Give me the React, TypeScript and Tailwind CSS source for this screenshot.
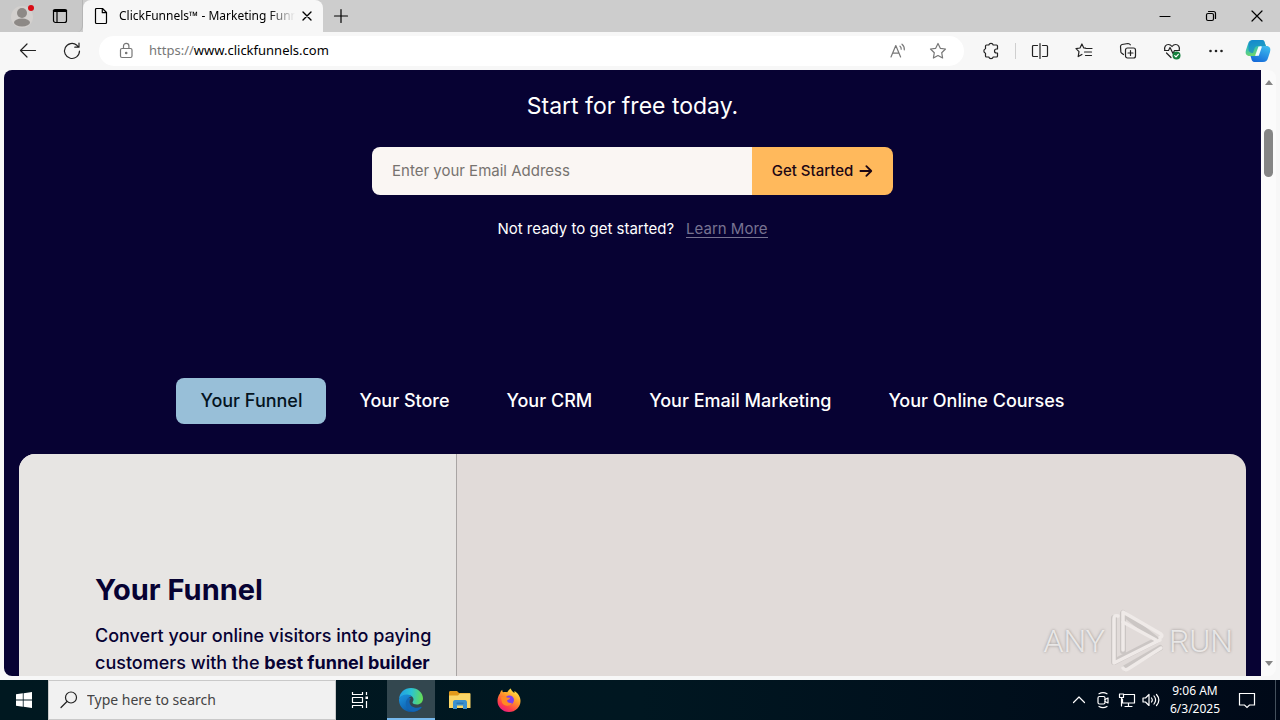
import type { ReactNode } from "react";

type IconProps = { children: ReactNode; className?: string };

function Icon({ children, className = "size-5" }: IconProps) {
  return (
    <svg
      viewBox="0 0 20 20"
      className={className}
      fill="none"
      stroke="currentColor"
      strokeWidth="1.2"
      strokeLinecap="round"
      strokeLinejoin="round"
      aria-hidden="true"
    >
      {children}
    </svg>
  );
}

type BarButtonProps = { label: string; className: string; children: ReactNode };

function BarButton({ label, className, children }: BarButtonProps) {
  return (
    <button
      type="button"
      aria-label={label}
      className={`flex shrink-0 items-center justify-center ${className}`}
    >
      {children}
    </button>
  );
}

function TabStrip() {
  return (
    <header className="flex h-8 shrink-0 bg-[#cdcdcd] text-black">
      <div className="flex w-[83px] shrink-0 items-center rounded-br-md border-r border-[#b5b5b5] bg-[#c8c8c8] pl-1">
        <BarButton label="Profile" className="w-9">
          <svg viewBox="0 0 26 26" className="size-[26px]" aria-hidden="true">
            <circle cx="13" cy="14" r="11" fill="#d3d0ce" />
            <circle cx="13" cy="10" r="5" fill="#8d8986" />
            <ellipse cx="13" cy="19.500" rx="8" ry="4" fill="#8d8986" />
            <circle cx="22" cy="5" r="3" fill="#d90b15" />
          </svg>
        </BarButton>
        <BarButton label="Workspaces" className="w-10">
          <Icon>
            <rect x="3.500" y="3.500" width="13" height="13" rx="2" />
            <path d="M4 4.800h12" strokeWidth="2.400" />
            <path d="M7 6v10.500" />
          </Icon>
        </BarButton>
      </div>
      <div className="flex w-60 shrink-0 items-center rounded-t-lg bg-[#f7f7f7] pl-2">
        <Icon className="size-5 shrink-0">
          <path d="M5.500 2.500h6l4 4v10a1 1 0 0 1-1 1h-9a1 1 0 0 1-1-1v-13a1 1 0 0 1 1-1z" />
          <path d="M11.300 2.700v4h4" />
        </Icon>
        <span className="ml-2 w-[176px] overflow-hidden bg-linear-to-r from-black from-85% to-transparent bg-clip-text text-xs whitespace-nowrap text-transparent">
          ClickFunnels™ - Marketing Funnels
        </span>
        <BarButton label="Close tab" className="w-6">
          <Icon className="size-4">
            <path d="M5 5l10 10M15 5L5 15" strokeWidth="1.700" />
          </Icon>
        </BarButton>
      </div>
      <BarButton label="New tab" className="w-9">
        <Icon>
          <path d="M10 3.500v13M3.500 10h13" />
        </Icon>
      </BarButton>
      <div className="ml-auto flex">
        <BarButton label="Minimize" className="w-[46px]">
          <Icon>
            <path d="M5 10.500h10" />
          </Icon>
        </BarButton>
        <BarButton label="Restore" className="w-[46px]">
          <Icon>
            <rect x="5.500" y="7.500" width="7" height="7" rx="1.500" />
            <path d="M7.500 5.500h5a2 2 0 0 1 2 2v5" />
          </Icon>
        </BarButton>
        <BarButton label="Close" className="w-[46px]">
          <Icon>
            <path d="M5 5l10 10M15 5L5 15" />
          </Icon>
        </BarButton>
      </div>
    </header>
  );
}

function CopilotLogo() {
  return (
    <svg viewBox="0 0 26 26" className="size-[26px]" aria-hidden="true">
      <defs>
        <linearGradient id="copilot-a" x1="0" y1="0" x2="0.3" y2="1">
          <stop offset="0" stopColor="#1489cf" />
          <stop offset="0.5" stopColor="#35c0b4" />
          <stop offset="1" stopColor="#6fd66c" />
        </linearGradient>
        <linearGradient id="copilot-b" x1="0.7" y1="0" x2="0.2" y2="1">
          <stop offset="0" stopColor="#3bb9ee" />
          <stop offset="1" stopColor="#1367d8" />
        </linearGradient>
      </defs>
      <path d="M8 2h9c2 0 2.500 1.500 3 3.500L21 8h-4c-2 0-3 1-3.500 2.500L11 18H5c-4 0-5-2.500-4-6l2-6c.8-2.500 2-4 5-4z" fill="url(#copilot-a)" />
      <path d="M8 2h9c2 0 2.500 1.500 3 3.500L21 8h-8c-2 0-3 1-3.500 2.500L8 15C5 15 3 13 3.500 10c.5-4 1.500-8 4.500-8z" fill="#0f83cf" opacity=".65" />
      <path d="M18 24H9.500c-2 0-2.700-1.500-3.200-3.500L5.500 18H10c2 0 3-1 3.500-2.500L16 8h5c4 0 5 2.500 4 6l-2 6c-.8 2.500-2 4-5 4z" fill="url(#copilot-b)" />
      <path d="M13.500 8.500H17l-3.200 9.200H10z" fill="#f4fbff" />
    </svg>
  );
}

const STAR = "M10 2.500l2.300 4.800 5.200.7-3.800 3.700.9 5.300-4.600-2.500L5.400 17l.9-5.300L2.500 8l5.200-.7z";

function Toolbar() {
  return (
    <nav className="flex h-[38px] shrink-0 items-center bg-[#f7f7f7] pr-0.5 pl-1.5 text-[#222]">
      <BarButton label="Back" className="w-11">
        <Icon>
          <path d="M17.500 9.500h-15M9 3L2.500 9.500 9 16" />
        </Icon>
      </BarButton>
      <BarButton label="Refresh" className="w-11">
        <Icon>
          <path d="M17.500 10a7.500 7.500 0 1 1-2.600-5.700l1.600 1.600M17 2v4.200h-4.200" />
        </Icon>
      </BarButton>
      <div className="mx-[5px] flex h-[30px] min-w-0 flex-1 items-center rounded-full bg-white pl-4">
        <BarButton label="Site information" className="w-[22px] text-[#777]">
          <Icon>
            <rect x="4.500" y="7.500" width="11.500" height="9" rx="1.500" />
            <path d="M7.500 7.300V5a2.700 2.700 0 0 1 5.400 0v2.300" />
            <circle cx="10.200" cy="12" r="0.700" fill="currentColor" />
          </Icon>
        </BarButton>
        <div className="ml-3 flex-1 text-[13px] whitespace-nowrap text-black">
          <span className="text-[#777]">https://</span>www.clickfunnels.com
        </div>
        <BarButton label="Read aloud" className="w-10 text-[#777]">
          <Icon>
            <path d="M3 16L7.800 4.500 12.600 16M4.600 12.200h6.400" />
            <path d="M12 5.200c1 .8 1.300 1.900 1.200 3M14 3.200c1.900 1.500 2.500 3.400 2.300 5.600" />
          </Icon>
        </BarButton>
        <BarButton label="Add to favorites" className="mr-1.5 w-10 text-[#777]">
          <Icon>
            <path d={STAR} />
          </Icon>
        </BarButton>
      </div>
      <BarButton label="Extensions" className="w-11">
        <Icon>
          <path d="M5.500 4h2.300a2.300 2.300 0 0 1 4.400 0h3.300a1 1 0 0 1 1 1v3h-1a2 2 0 0 0 0 4h1v3a1 1 0 0 1-1 1h-3.300a2.300 2.300 0 0 1-4.400 0H5.500a1 1 0 0 1-1-1v-2.800a2.300 2.300 0 0 1 0-4.400V5a1 1 0 0 1 1-1z" />
        </Icon>
      </BarButton>
      <div className="mx-0.5 h-4 w-px bg-[#cfcfcf]" />
      <BarButton label="Split screen" className="w-11">
        <Icon>
          <path d="M7.500 4.500h-4a1 1 0 0 0-1 1v9a1 1 0 0 0 1 1h4M12.500 4.500h4a1 1 0 0 1 1 1v9a1 1 0 0 1-1 1h-4M10 2.500v15" />
        </Icon>
      </BarButton>
      <BarButton label="Favorites" className="w-11">
        <Icon>
          <path d="M11.600 7.200l-1.800-.3L7.900 3 6 7l-4 .6 3 3-.8 5 3.700-2.200M12 7.500h6M10.500 11h7M11.500 14.500h6" />
        </Icon>
      </BarButton>
      <BarButton label="Collections" className="w-11">
        <Icon>
          <rect x="7.500" y="7" width="10" height="10" rx="2" />
          <path d="M12.500 9.500v5M10 12h5M5.500 13.500l-2-1.500a2 2 0 0 1-.7-2L2.500 5.500c0-1 .5-1.700 1.500-2l6-1c1 0 1.800.4 2.300 1.300" />
        </Icon>
      </BarButton>
      <BarButton label="Browser essentials" className="w-11">
        <Icon>
          <path d="M2.800 9c-.8-3 .9-5.500 3.600-5.500 1.600 0 2.700.8 3.600 2 .9-1.200 2-2 3.600-2 2.700 0 4.400 2.500 3.600 5.500M2.500 9.500h4l1.500-3 3 6 1.500-3h5M4.500 12l4.500 4.500" />
          <circle cx="14.500" cy="14.500" r="4" fill="#15803d" stroke="none" />
          <path d="M12.700 14.600l1.300 1.300 2.300-2.600" stroke="#fff" />
        </Icon>
      </BarButton>
      <BarButton label="Settings and more" className="w-11">
        <Icon>
          <g fill="currentColor" stroke="none">
            <circle cx="4.500" cy="10" r="1.300" />
            <circle cx="10" cy="10" r="1.300" />
            <circle cx="15.500" cy="10" r="1.300" />
          </g>
        </Icon>
      </BarButton>
      <BarButton label="Copilot" className="w-10">
        <CopilotLogo />
      </BarButton>
    </nav>
  );
}

const PRODUCTS = ["Your Funnel", "Your Store", "Your CRM", "Your Email Marketing", "Your Online Courses"];

function ProductTabs() {
  return (
    <div role="tablist" className="mt-[139px] flex justify-center gap-[9px] text-lg font-medium text-white">
      {PRODUCTS.map((name, i) => (
        <button
          key={name}
          type="button"
          role="tab"
          aria-selected={i === 0}
          className={
            i === 0
              ? "h-[46px] rounded-lg bg-[#98bfd8] px-6 whitespace-nowrap text-[#04141f]"
              : "h-[46px] rounded-lg px-6 whitespace-nowrap"
          }
        >
          {name}
        </button>
      ))}
    </div>
  );
}

function Watermark() {
  return (
    <div className="absolute right-7 bottom-0.5 flex items-center gap-1 font-['Roboto',sans-serif] text-[32px] font-light text-white/70 [text-shadow:0_0_3px_rgba(0,0,0,0.35)]">
      <span>ANY</span>
      <svg viewBox="0 0 56 66" className="h-[66px] w-14" fill="none" strokeLinejoin="round" strokeLinecap="round" aria-hidden="true">
        <g stroke="#bdb8b6" strokeWidth="6" opacity=".6">
          <path d="M5 10v44l43-22L14 5v38M16 60l35-20" />
        </g>
        <g stroke="#efeae8" strokeWidth="3.500">
          <path d="M9 8c-3-1-4 0-4 3v44l46-23" />
          <path d="M14 42V4l38 22c1.500 1.200 1 3-1 3.500" />
          <path d="M14 14l33 18M14 60c1 2 3 2 5 1l33-21" />
        </g>
      </svg>
      <span>RUN</span>
    </div>
  );
}

function PageContent() {
  return (
    <main className="relative min-w-0 flex-1 overflow-hidden rounded-l-lg bg-[#070233] font-['Inter',sans-serif] text-white">
      <section className="flex flex-col items-center pt-5">
        <h2 className="text-[23px] leading-8">Start for free today.</h2>
        <form className="mt-[25px] flex h-12 w-[521px] max-w-full overflow-hidden rounded-lg text-[15px]" onSubmit={(e) => e.preventDefault()}>
          <input
            type="email"
            aria-label="Email address"
            placeholder="Enter your Email Address"
            className="min-w-0 flex-1 bg-[#faf6f3] px-5 text-black outline-none placeholder:text-[#77736f]"
          />
          <button type="submit" className="flex w-[141px] items-center justify-center gap-1.5 bg-[#ffb95c] font-medium text-[#1c0714]">
            Get Started
            <Icon className="size-3.5">
              <path d="M2 10h15M10.500 3l7 7-7 7" strokeWidth="2.600" />
            </Icon>
          </button>
        </form>
        <p className="mt-6 flex items-baseline gap-3 text-[15px] leading-5">
          Not ready to get started?
          <a href="#learn" className="border-b border-[#777391] leading-[17px] text-[#777391]">
            Learn More
          </a>
        </p>
      </section>
      <ProductTabs />
      <section className="mx-[15px] mt-[30px] flex h-[360px] overflow-hidden rounded-2xl bg-[#e1dbd9] text-[#070233]">
        <div className="w-[438px] shrink-0 border-r border-[#a9a5a4] bg-[#e7e5e3] pt-[114px] pl-[76px]">
          <h1 className="text-[29px] leading-11 font-bold">Your Funnel</h1>
          <p className="mt-2.5 text-lg leading-[27px] font-medium">
            Convert your online visitors into paying customers with the <strong>best funnel builder</strong>
          </p>
        </div>
      </section>
      <Watermark />
    </main>
  );
}

function ScrollBar() {
  return (
    <div className="flex w-[15px] shrink-0 flex-col items-center justify-between rounded-r-lg bg-[#fbfbfb] py-2.5" aria-hidden="true">
      <svg viewBox="0 0 8 5" className="h-[5px] w-2" fill="#858585">
        <path d="M4 0l4 5H0z" />
      </svg>
      <div className="mt-11 mb-auto h-12 w-[9px] rounded-full bg-[#858585]" />
      <svg viewBox="0 0 8 5" className="h-[5px] w-2" fill="#858585">
        <path d="M4 5l4-5H0z" />
      </svg>
    </div>
  );
}

function EdgeLogo() {
  return (
    <svg viewBox="0 0 24 24" className="size-6" aria-hidden="true">
      <defs>
        <linearGradient id="edge-top" x1="0" y1="0.4" x2="1" y2="0.5">
          <stop offset="0" stopColor="#209ee5" />
          <stop offset="0.5" stopColor="#2bc3d2" />
          <stop offset="1" stopColor="#66dd52" />
        </linearGradient>
        <linearGradient id="edge-low" x1="0" y1="0" x2="0.8" y2="1">
          <stop offset="0" stopColor="#1b95e0" />
          <stop offset="1" stopColor="#0a4f9e" />
        </linearGradient>
      </defs>
      <path d="M0 11C.6 4.500 5.500 0 12 0c7 0 12 5 12 10.500 0 3.800-2.800 6-6 6-2.500 0-4.500-1-4.500-2 0-.8 1-1.200 1-3C14.500 9 12 7 8.500 7 4 7 1 9 0 11z" fill="url(#edge-top)" />
      <path d="M0 11c1-2.500 4-4.500 8-4.500 2.300 0 4 .8 5 2-3 0-5 2.500-5 5.500 0 4.500 4 7.500 8 7.500 2.500 0 4.500-1 6-2.500.4-.3.8.1.500.5C20.500 22.500 16.500 24 12 24 5 24-.5 18 0 11z" fill="url(#edge-low)" />
      <path d="M9 10c-4.500 4-2 13 5 13.700 3.500-.3 7-2 8.500-4.500.2-.4-.2-.6-.5-.4-5 2.500-11.500.2-11.500-5 0-1.500.5-2.600 1.500-3.300-.8-.8-2-.9-3-.5z" fill="#1266b4" />
    </svg>
  );
}

function FolderLogo() {
  return (
    <svg viewBox="0 0 24 22" className="h-[22px] w-6" aria-hidden="true">
      <path d="M1 3.500c0-.8.500-1.500 1.500-1.500H9l2 2h11v14H1z" fill="#e39a1b" />
      <path d="M1 6.500h9l2-2h10.500V19H1z" fill="#fbd667" />
      <path d="M5 20v-6.500c0-1.500.7-2.500 2-2.500h10c1.300 0 2 1 2 2.500V20h-4v-3.500H9V20z" fill="#3d91cf" />
      <path d="M8.500 13.500h7v1.500h-7z" fill="#2c77b3" />
    </svg>
  );
}

function FirefoxLogo() {
  return (
    <svg viewBox="0 0 24 24" className="size-6" aria-hidden="true">
      <defs>
        <linearGradient id="fox" x1="0.8" y1="0" x2="0.2" y2="1">
          <stop offset="0" stopColor="#fff24a" />
          <stop offset="0.4" stopColor="#ff9a29" />
          <stop offset="0.75" stopColor="#ff3f49" />
          <stop offset="1" stopColor="#e4148f" />
        </linearGradient>
      </defs>
      <path d="M3 5.500C3.500 3.800 4 2.500 5.300 1.800c-.1 1 .2 1.800.8 2.500 1.200-.5 2.700-.4 4 0C11.300 3 12 1.500 13.800.5c.3 2 2 3 3.500 4.500.3-.7.200-1.300 0-2 3.500 2 6.200 5.500 6.200 10 0 6-5 11-11.500 11S.5 19 .5 13c0-3 .9-5.500 2.500-7.500z" fill="url(#fox)" />
      <circle cx="12.500" cy="12" r="4.500" fill="#7b3ff0" />
      <path d="M4 9.500c2-1.500 4.500-1 6 0l3 .3c.3 1.500-1.800 2-3 2.700.4 2 2.500 3.200 5 2.200-1.500 4-8 4-10 0z" fill="#ff8a24" />
    </svg>
  );
}

function Taskbar() {
  return (
    <footer className="flex h-10 shrink-0 bg-linear-to-r from-[#001820] via-[#001721] to-[#000918] text-white">
      <BarButton label="Start" className="w-12">
        <svg viewBox="0 0 16 16" className="size-4" fill="#fff" aria-hidden="true">
          <path d="M0 2.300L6.800 1.300v6.300H0zM7.600 1.200L16 0v7.600H7.600zM0 8.400h6.800v6.300L0 13.700zM7.600 8.400H16V16l-8.400-1.200z" />
        </svg>
      </BarButton>
      <label className="flex w-72 shrink-0 items-center gap-2 border border-[#c9c9c9] bg-[#f1f1f1] pl-2.5 text-[#222]">
        <Icon>
          <circle cx="12" cy="7.500" r="5.500" />
          <path d="M8 11.500L2 17.500" />
        </Icon>
        <input
          type="text"
          aria-label="Search"
          placeholder="Type here to search"
          className="min-w-0 flex-1 bg-transparent text-sm outline-none placeholder:text-[#444]"
        />
      </label>
      <BarButton label="Task view" className="mr-[3px] w-12">
        <Icon>
          <path d="M2.500 2v2.500h10V2M2.500 18v-2.500h10V18M2.500 7.500h10v5h-10zM16.500 2v3M16.500 11v7" strokeLinecap="butt" />
          <path d="M15.500 6.500h2.500V9h-2.500z" fill="currentColor" stroke="none" />
        </Icon>
      </BarButton>
      <BarButton label="Microsoft Edge" className="w-12 border-y-2 border-t-[#33474f] border-b-[#76b9ed] bg-[#33474f]">
        <EdgeLogo />
      </BarButton>
      <BarButton label="File Explorer" className="w-[49px]">
        <FolderLogo />
      </BarButton>
      <BarButton label="Firefox" className="w-[49px]">
        <FirefoxLogo />
      </BarButton>
      <div className="ml-auto flex">
        <BarButton label="Show hidden icons" className="w-6">
          <Icon>
            <path d="M4.500 12.500L10 7l5.500 5.500" />
          </Icon>
        </BarButton>
        <BarButton label="Meet now" className="w-6">
          <Icon>
            <rect x="5" y="6.500" width="7" height="7.500" rx="1.500" />
            <path d="M12 9.500l3-1.500v5l-3-1.500M6 3.800c2.500-1.500 5.500-1.500 8 0M6 16.500c2.500 1.500 5.500 1.500 8 0" />
          </Icon>
        </BarButton>
        <BarButton label="Network" className="w-6">
          <Icon>
            <path d="M7 4.500h10.500v8.500H5.500V9M11.500 13v3.500M8 16.500h7M2.500 4h4v3.500h-4zM4.500 7.500V16" />
          </Icon>
        </BarButton>
        <BarButton label="Volume" className="w-6">
          <Icon>
            <path d="M2 8h2.500L8 4.500v11L4.500 12H2zM10.500 8c1 1.300 1 2.700 0 4M13 6c2 2.500 2 5.500 0 8M15.500 4.500c3 3.500 3 7.500 0 11" />
          </Icon>
        </BarButton>
        <div className="flex w-16 flex-col items-center justify-center text-xs leading-[18px] whitespace-nowrap">
          <time>9:06 AM</time>
          <time>6/3/2025</time>
        </div>
        <BarButton label="Notifications" className="w-10">
          <Icon>
            <path d="M2.500 3.500h15v11.500h-5L10 17.500 7.500 15h-5z" strokeLinejoin="miter" />
          </Icon>
        </BarButton>
        <div className="ml-2 w-[5px] border-l border-[#44505c]" />
      </div>
    </footer>
  );
}

export default function App() {
  return (
    <div className="flex h-screen flex-col overflow-hidden bg-[#f7f7f7] font-['Noto_Sans',sans-serif]">
      <TabStrip />
      <Toolbar />
      <div className="flex min-h-0 flex-1 pr-1 pb-1 pl-1">
        <PageContent />
        <ScrollBar />
      </div>
      <Taskbar />
    </div>
  );
}
